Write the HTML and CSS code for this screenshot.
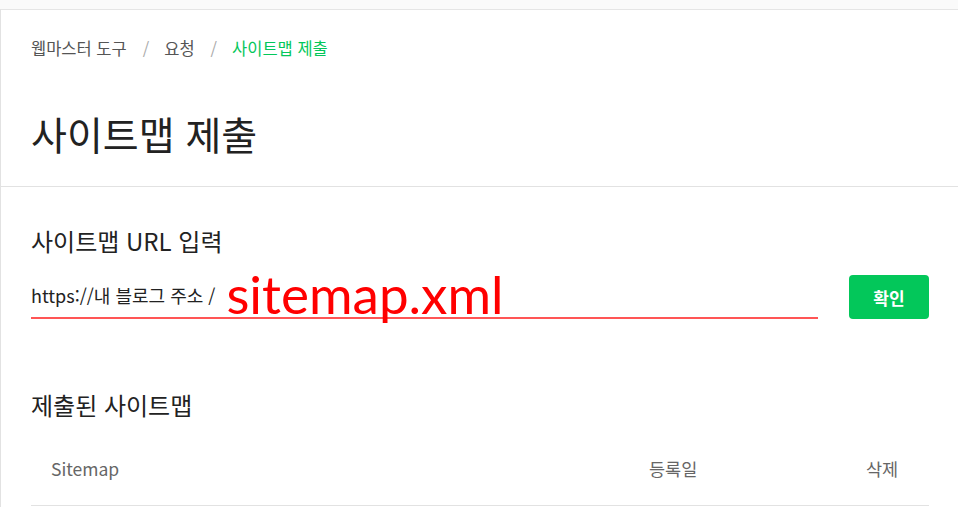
FILE: index.html
```html
<!DOCTYPE html>
<html lang="ko">
<head>
    <meta charset="UTF-8">
    <meta name="viewport" content="width=device-width, initial-scale=1.0">
    <title>사이트맵 제출</title>
    <link rel="stylesheet" href="styles.css">
</head>
<body>

    <div class="page">
        <div class="page-header">
            <div class="breadcrumb">
                <span>웹마스터 도구</span>
                <span class="sep">/</span>
                <span>요청</span>
                <span class="sep">/</span>
                <span class="current">사이트맵 제출</span>
            </div>
            <h1>사이트맵 제출</h1>
        </div>

        <div class="section">
            <h2>사이트맵 URL 입력</h2>
            <div class="url-row">
                <div class="url-input">
                    <span class="prefix">https://내 블로그 주소 /</span>
                    <span class="value">sitemap.xml</span>
                </div>
                <button class="btn-confirm">확인</button>
            </div>

            <h2 class="list-title">제출된 사이트맵</h2>
            <div class="list-head">
                <div class="col-name">Sitemap</div>
                <div class="col-date">등록일</div>
                <div class="col-del">삭제</div>
            </div>
        </div>
    </div>

</body>
</html>
```

FILE: styles.css
```css
body { margin: 0; padding-top: 9px; background-color: #fafafa; font-family: "Noto Sans CJK KR", "Noto Sans", sans-serif; color: #222; }
.page { background-color: #fff; border-top: 1px solid #e5e5e5; border-left: 1px solid #e2e2e2; height: 497px; overflow: hidden; }

.page-header { padding: 26px 29px 27px 30px; border-bottom: 1px solid #e2e2e2; }
.breadcrumb { font-size: 16.5px; line-height: 24px; color: #555; display: flex; }
.breadcrumb .sep { color: #aaa; margin: 0 15px 0 16px; }
.breadcrumb .current { color: #03c75a; }
.page-header h1 { margin: 47px 0 0; font-size: 39px; font-weight: 400; line-height: 52px; color: #222; }

.section { padding: 38px 29px 0 30px; }
.section h2 { margin: 0; font-size: 24px; font-weight: 400; line-height: 32px; color: #222; }

.url-row { display: flex; align-items: flex-end; margin-top: 18px; }
.url-input { flex: 1; height: 44px; display: flex; align-items: flex-end; border-bottom: 2px solid #f55; margin-right: 31px; box-sizing: border-box; }
.url-input .prefix { font-size: 18px; line-height: 24px; margin-bottom: 10px; color: #222; }
.url-input .value { font-family: Lato, "Open Sans", sans-serif; font-size: 53px; line-height: 52px; color: #f00; margin-left: 11px; margin-bottom: -3px; }
.btn-confirm { width: 80px; height: 44px; background-color: #03c75a; color: #fff; border: none; border-radius: 4px; font-family: "Noto Sans CJK KR", sans-serif; font-size: 17px; font-weight: 700; cursor: pointer; }

.list-title { margin-top: 70px !important; }
.list-head { display: grid; grid-template-columns: 1fr 200px 94px; margin-top: 20px; padding: 16px 0 24px; border-bottom: 1px solid #e2e2e2; font-size: 17.5px; line-height: 24px; color: #666; }
.col-name { padding-left: 20px; }
.col-date { padding-left: 14px; }
.col-del { text-align: center; }
```
